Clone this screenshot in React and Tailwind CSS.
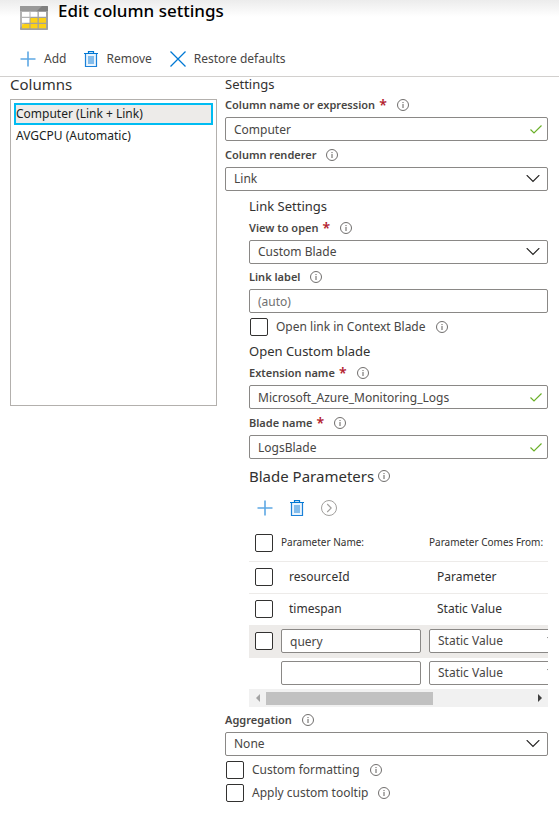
import React from "react";

function InfoIcon() {
  return (
    <svg className="size-3 shrink-0" viewBox="0 0 12 12" fill="none" role="img" aria-label="Info">
      <circle cx="6" cy="6" r="5.5" stroke="#605e5c" strokeWidth="0.9" />
      <path d="M6 5V9" stroke="#605e5c" strokeWidth="1" />
      <path d="M6 3V4.1" stroke="#605e5c" strokeWidth="1" />
    </svg>
  );
}

function PlusIcon() {
  return (
    <svg className="size-4 shrink-0" viewBox="0 0 16 16" fill="none" aria-hidden="true">
      <path d="M8 0.5V15.5M0.5 8H15.5" stroke="#5ea8e4" strokeWidth="1.6" />
    </svg>
  );
}

function TrashIcon() {
  return (
    <svg className="h-4 w-3.5 shrink-0" viewBox="0 0 14 16" fill="none" aria-hidden="true">
      <path d="M1.5 3V15.5H12.5V3" fill="#eaf4fd" stroke="#1a80d8" strokeWidth="1.2" />
      <path d="M0 2.5H14M4.5 2V0.6H9.5V2" stroke="#0078d4" strokeWidth="1.2" />
      <rect x="4" y="5" width="6" height="8" fill="#83bceb" />
    </svg>
  );
}

function CrossIcon() {
  return (
    <svg className="size-4 shrink-0" viewBox="0 0 16 16" fill="none" aria-hidden="true">
      <path d="M0.5 0.5L15.5 15.5M15.5 0.5L0.5 15.5" stroke="#0078d4" strokeWidth="1.3" />
    </svg>
  );
}

function GoIcon() {
  return (
    <svg className="size-4 shrink-0" viewBox="0 0 16 16" fill="none" stroke="#a19f9d" aria-hidden="true">
      <circle cx="8" cy="8" r="7.5" />
      <path d="M6.2 4L10.2 8L6.2 12" strokeWidth="1.1" />
    </svg>
  );
}

function TableIcon() {
  return (
    <svg className="h-6 w-7 shrink-0" viewBox="0 0 28 24" aria-hidden="true">
      <rect width="28" height="24" rx="0.7" fill="#a0a0a0" />
      <path d="M0 0.7Q0 0 0.7 0H27.3Q28 0 28 0.7V5H0Z" fill="#7f7f7f" />
      <path d="M2 6h7.5v4.7H2zM10.5 6h7v4.7h-7zM18.8 6H26v4.7h-7.2zM2 12h7.5v4.7H2z" fill="#fff" />
      <path d="M10.5 12h7v4.7h-7zM18.8 12H26v4.7h-7.2zM2 18h7.5v4.3H2zM10.5 18h7v4.3h-7zM18.8 18H26v4.3h-7.2z" fill="#fcd116" />
      <path d="M0 0.7Q0 0 0.7 0H22L0 22Z" fill="#fff" fillOpacity="0.2" />
    </svg>
  );
}

function Label({ htmlFor, required, children }) {
  return (
    <div className="flex h-6 items-center">
      <label htmlFor={htmlFor} className="flex items-center text-[11px] font-semibold text-[#484644]">
        {children}
        {required && <span className="ml-1 text-sm leading-4 text-[#b3202c]">*</span>}
      </label>
      <span className="ml-2.5 flex"><InfoIcon /></span>
    </div>
  );
}

const box =
  "block h-6 w-full appearance-none rounded-xs border border-[#8a8886] bg-white px-2 text-xs leading-5 text-[#484644] placeholder:text-[#707070] outline-none";

function TextField({ id, label, required, value, placeholder, valid }) {
  return (
    <div>
      <Label htmlFor={id} required={required}>{label}</Label>
      <div className="relative">
        <input id={id} type="text" defaultValue={value} placeholder={placeholder} className={box} />
        {valid && (
          <svg className="absolute top-2 right-1.5 h-2.5 w-3" viewBox="0 0 12 10" fill="none" aria-hidden="true">
            <path d="M0.5 4.5L4 8L11.5 0.5" stroke="#6bb02a" strokeWidth="1.2" />
          </svg>
        )}
      </div>
    </div>
  );
}

function Select({ id, value, ariaLabel }) {
  return (
    <div className="relative">
      <select id={id} aria-label={ariaLabel} defaultValue={value} className={box}>
        <option>{value}</option>
      </select>
      <svg className="pointer-events-none absolute top-2 right-2 h-2 w-3.5" viewBox="0 0 14 8" fill="none" aria-hidden="true">
        <path d="M0.7 0.2L7 6.5L13.3 0.2" stroke="#201f1e" strokeWidth="1.2" />
      </svg>
    </div>
  );
}

function SelectField({ id, label, required, value }) {
  return (
    <div>
      <Label htmlFor={id} required={required}>{label}</Label>
      <Select id={id} value={value} />
    </div>
  );
}

function Checkbox({ id, ariaLabel }) {
  return (
    <input
      id={id}
      type="checkbox"
      aria-label={ariaLabel}
      className="block size-[18px] shrink-0 appearance-none rounded-xs border border-[#323130] bg-white checked:bg-[#0078d4]"
    />
  );
}

function CheckField({ id, label }) {
  return (
    <div className="flex h-[23px] items-center pl-px">
      <Checkbox id={id} />
      <label htmlFor={id} className="ml-2 text-xs text-[#484644]">{label}</label>
      <span className="ml-2.5 flex"><InfoIcon /></span>
    </div>
  );
}

function ToolButton({ icon, children }) {
  return (
    <button type="button" className="flex items-center gap-2 text-xs text-[#484644]">
      {icon}
      {children}
    </button>
  );
}

function ParameterTable() {
  return (
    <div>
      <div className="overflow-hidden">
        <table className="w-[476px] table-fixed border-separate border-spacing-0 text-left text-xs text-[#323130]">
          <colgroup>
            <col className="w-8" />
            <col className="w-[148px]" />
            <col className="w-[148px]" />
            <col className="w-[148px]" />
          </colgroup>
          <thead>
            <tr className="h-[38px] text-[10px] [&>*]:pt-0.5">
              <td className="pl-1.5"><Checkbox ariaLabel="Select all parameters" /></td>
              <th scope="col" className="font-normal">Parameter Name:</th>
              <th scope="col" className="font-normal">Parameter Comes From:</th>
              <td />
            </tr>
          </thead>
          <tbody className="[&_td]:h-8 [&_td]:border-t [&_td]:border-[#edebe9] [&_td]:pb-px">
            {[["resourceId", "Parameter"], ["timespan", "Static Value"]].map(([name, source]) => (
              <tr key={name}>
                <td className="pl-1.5"><Checkbox ariaLabel={name} /></td>
                <td className="pl-2">{name}</td>
                <td className="pl-2">{source}</td>
                <td />
              </tr>
            ))}
            <tr className="bg-[#edebe9]">
              <td className="pl-1.5"><Checkbox ariaLabel="query" /></td>
              <td className="pr-2"><input type="text" aria-label="Parameter name" defaultValue="query" className={box} /></td>
              <td className="pr-2"><Select ariaLabel="Parameter source" value="Static Value" /></td>
              <td />
            </tr>
            <tr>
              <td />
              <td className="pr-2"><input type="text" aria-label="New parameter name" className={box} /></td>
              <td className="pr-2"><Select ariaLabel="New parameter source" value="Static Value" /></td>
              <td />
            </tr>
          </tbody>
        </table>
      </div>
      <div className="flex h-[18px] items-center bg-[#f1f1f1]">
        <button type="button" aria-label="Scroll left" className="flex w-[17px] justify-center">
          <svg className="h-2 w-1" viewBox="0 0 4 8" fill="#a3a3a3"><path d="M4 0V8L0 4Z" /></svg>
        </button>
        <div className="flex-1"><div className="h-[13px] w-[63%] bg-[#c1c1c1]" /></div>
        <button type="button" aria-label="Scroll right" className="flex w-[17px] justify-center">
          <svg className="h-2 w-1" viewBox="0 0 4 8" fill="#404040"><path d="M0 0V8L4 4Z" /></svg>
        </button>
      </div>
    </div>
  );
}

export default function App() {
  return (
    <div className="min-h-screen bg-white font-['Noto_Sans','Open_Sans',sans-serif] text-[#323130]">
      <header className="flex h-[42px] gap-2.5 bg-linear-to-b from-[#ececec] to-white to-40% pl-5">
        <span className="mt-1.5"><TableIcon /></span>
        <h1 className="text-[17px] leading-[22px] font-medium text-black">Edit column settings</h1>
      </header>
      <div className="flex h-[35px] items-center gap-[18px] border-b border-[#d2d0ce] pl-5">
        <ToolButton icon={<PlusIcon />}>Add</ToolButton>
        <ToolButton icon={<TrashIcon />}>Remove</ToolButton>
        <ToolButton icon={<CrossIcon />}>Restore defaults</ToolButton>
      </div>
      <main className="flex gap-2 pr-[11px] pl-2.5">
        <section className="w-[207px] shrink-0">
          <h2 className="h-[22px] text-[15px] leading-[14px]">Columns</h2>
          <ul role="listbox" aria-label="Columns" className="h-[307px] border border-[#b3b0ad] p-[3px] text-xs leading-[18px] text-[#201f1e]">
            <li role="option" aria-selected="true" className="border-2 border-[#00bcf2] bg-[#edebe9]">Computer (Link + Link)</li>
            <li role="option" aria-selected="false" className="border-2 border-transparent">AVGCPU (Automatic)</li>
          </ul>
        </section>
        <section className="min-w-0 flex-1">
          <h2 className="h-4 text-[13px] leading-[14px]">Settings</h2>
          <div className="flex flex-col gap-0.5">
            <TextField id="name" label="Column name or expression" required value="Computer" valid />
            <SelectField id="renderer" label="Column renderer" value="Link" />
          </div>
          <div className="pl-6">
            <h3 className="mt-[5px] text-[13px] leading-5">Link Settings</h3>
            <div className="flex flex-col gap-px">
              <SelectField id="view" label="View to open" required value="Custom Blade" />
              <TextField id="link-label" label="Link label" placeholder="(auto)" />
            </div>
            <div className="mt-0.5"><CheckField id="context" label="Open link in Context Blade" /></div>
            <h3 className="mt-[3px] text-[13px] leading-5">Open Custom blade</h3>
            <div className="flex flex-col gap-0.5">
              <TextField id="extension" label="Extension name" required value="Microsoft_Azure_Monitoring_Logs" valid />
              <TextField id="blade" label="Blade name" required value="LogsBlade" valid />
            </div>
            <div className="flex h-[34px] items-center gap-1">
              <h3 className="text-[15px] leading-5">Blade Parameters</h3>
              <InfoIcon />
            </div>
            <div className="flex h-[30px] items-center gap-4 pl-2">
              <button type="button" aria-label="Add parameter"><PlusIcon /></button>
              <button type="button" aria-label="Delete parameter" className="px-px"><TrashIcon /></button>
              <button type="button" aria-label="Go"><GoIcon /></button>
            </div>
            <ParameterTable />
          </div>
          <div className="mt-px">
            <SelectField id="aggregation" label="Aggregation" value="None" />
          </div>
          <div className="mt-0.5">
            <CheckField id="formatting" label="Custom formatting" />
            <CheckField id="tooltip" label="Apply custom tooltip" />
          </div>
        </section>
      </main>
    </div>
  );
}
